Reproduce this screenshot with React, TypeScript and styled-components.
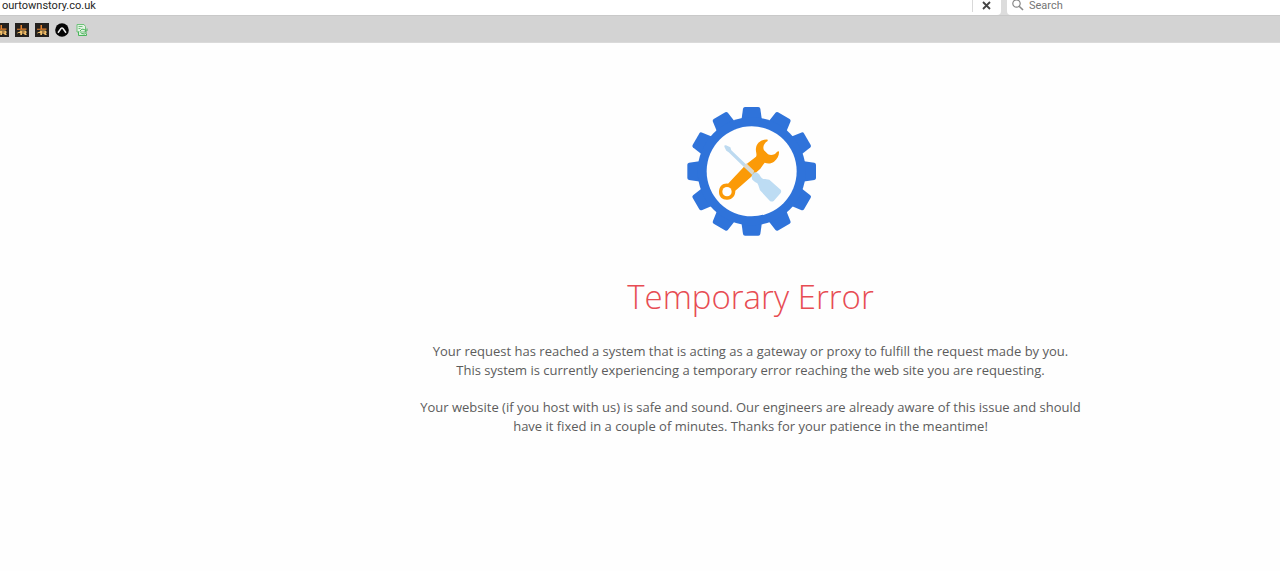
import React from 'react';
import styled, { createGlobalStyle } from 'styled-components';

const GlobalStyle = createGlobalStyle`
  * { box-sizing: border-box; }
  body {
    margin: 0;
    background: #fefefe;
    font-family: "Open Sans", sans-serif;
  }
`;

const Toolbar = styled.header`
  display: flex;
  gap: 6px;
  height: 16px;
  background: #dcdcdc;
  border-bottom: 1px solid #c9c9c9;
  overflow: hidden;
`;

const Field = styled.div<{ $grow?: boolean }>`
  display: flex;
  align-items: flex-start;
  ${(p) => (p.$grow ? 'flex: 1; border-radius: 0 0 4px 0;' : 'width: 273px; padding-left: 5px; border-radius: 0 0 0 4px;')}
  height: 15px;
  background: #fff;
`;

const TextInput = styled.input<{ $pad: number }>`
  flex: 1;
  min-width: 0;
  height: 12px;
  padding: 0 0 0 ${(p) => p.$pad}px;
  border: 0;
  outline: 0;
  background: transparent;
  color: #262626;
  font: 11px/12px Roboto, sans-serif;
  &::placeholder { color: #757575; opacity: 1; }
`;

const StopButton = styled.button`
  display: flex;
  justify-content: center;
  width: 29px;
  height: 12px;
  padding: 1px 2px 0 0;
  border: 0;
  border-left: 1px solid #d9d9d9;
  background: transparent;
`;

const Bookmarks = styled.nav`
  display: flex;
  align-items: center;
  gap: 6px;
  height: 27px;
  padding: 2px 0 0 1px;
  background: #d3d3d3;
  border-bottom: 1px solid #dadada;
  overflow: hidden;
`;

const Bookmark = styled.a<{ $cut?: boolean }>`
  display: block;
  width: 14px;
  height: 14px;
  margin-left: ${(p) => (p.$cut ? '-6px' : '0')};
  svg { display: block; }
`;

const Main = styled.main`
  display: flex;
  flex-direction: column;
  align-items: center;
  padding: 47px 0 48px 221px;
  text-align: center;
`;

const Title = styled.h1`
  margin: 21px 0 19px;
  color: #e74c53;
  font-size: 33px;
  line-height: 52px;
  font-weight: 300;
`;

const Message = styled.p`
  margin: 0 0 18px;
  color: #5c5c5c;
  font-size: 13px;
  line-height: 19px;
`;

const StarIcon = () => (
  <svg width="14" height="14" viewBox="0 0 14 14" aria-hidden="true">
    <rect width="14" height="14" fill="#24211e" />
    <path d="M5.500 2H7v3.500h4.500v1.300H2V5.700h3.500z" fill="#e8842e" />
    <path d="M5 7.500h5.500l1 1v1.500l-.7.5 1.200 1.500h-2L8.500 10.500H7V12H5.300v-2H3L2 11l.5-1.500L5 8.500z" fill="#f2c069" />
    <path d="M7 8.500h2.500v1H7z" fill="#5b3a1e" />
  </svg>
);

const PeakIcon = () => (
  <svg width="14" height="14" viewBox="0 0 14 14" aria-hidden="true">
    <circle cx="7" cy="7" r="6.800" fill="#050505" />
    <path d="M3 9.800 6 5.500q1-1.200 2 0L11 9.800" fill="none" stroke="#eee" strokeWidth="1.500" />
  </svg>
);

const PagesIcon = () => (
  <svg width="14" height="14" viewBox="0 0 14 14" aria-hidden="true">
    <path d="M2 1.500h7l1.500 2V9H2z" fill="#e6f3e6" stroke="#6cc278" />
    <path d="M3.500 3.500h4M3.500 5.500h2" stroke="#6cc278" />
    <path d="M3.500 8.500v4h8v-2" fill="#d9f1dc" stroke="#4bb45b" />
    <path d="M5 8q1.500-3 4.500-1.500L11 7.500M12 5.500V8H9.500M11.500 9.500q-2 2.500-4.500 1L5.500 9.500" fill="none" stroke="#4bb45b" />
  </svg>
);

const teeth = Array.from({ length: 12 }, (_, i) => i * 30);

const ServiceGear = () => (
  <svg width="160" height="160" viewBox="3 0 480 480" role="img" aria-label="Maintenance">
    <g fill="#2f73da">
      {teeth.map((angle) => (
        <path
          key={angle}
          transform={`rotate(${angle} 245 244)`}
          d="M214 92 219 56Q220 51 225 51H265Q270 51 271 56L276 92Z"
        />
      ))}
      <circle cx="245" cy="244" r="162" />
    </g>
    <circle cx="245" cy="244" r="135" fill="#fefefe" />
    <path
      fill="#fb9a07"
      d="M293 149C277 147 260 158 258 174C256 185 262 193 258 200L229 223L174 281C158 279 147 290 147 306C147 321 158 330 172 329C188 328 196 317 196 302L271 236L284 218C294 222 304 221 312 215C323 206 328 196 327 184L321 185C315 194 305 197 294 193L282 181C277 171 282 159 293 153Z"
    />
    <circle cx="171" cy="305" r="14" fill="#fefefe" />
    <path d="M163 170Q162 165 168 166L181 172L184 181L252 246L246 254L176 187L169 182Z" fill="#bddaf0" />
    <path d="M221 228 229 220 253 243 246 252Z" fill="#ded8c9" />
    <path
      fill="#bddcf3"
      d="M246 254 254 247Q261 246 267 252L273 262Q277 268 285 267L298 269L332 299Q335 303 332 309L311 333Q305 337 299 332L270 301L265 286Q264 278 255 276L247 269Q244 262 246 254Z"
    />
  </svg>
);

const App: React.FC = () => (
  <>
    <GlobalStyle />
    <Toolbar>
      <Field $grow>
        <TextInput $pad={2} aria-label="Address" defaultValue="ourtownstory.co.uk" />
        <StopButton aria-label="Stop loading">
          <svg width="9" height="9" viewBox="0 0 9 9" aria-hidden="true">
            <path d="M1 1 8 8M8 1 1 8" stroke="#444" strokeWidth="1.800" />
          </svg>
        </StopButton>
      </Field>
      <Field>
        <svg width="12" height="12" viewBox="0 0 12 12" aria-hidden="true">
          <circle cx="4.500" cy="3.500" r="3.700" fill="none" stroke="#888" strokeWidth="1.200" />
          <path d="M7.200 6.200 11 10" stroke="#888" strokeWidth="1.600" />
        </svg>
        <TextInput $pad={5} type="search" aria-label="Search" placeholder="Search" />
      </Field>
    </Toolbar>
    <Bookmarks aria-label="Bookmarks">
      <Bookmark $cut href="#one" aria-label="Bookmark 1"><StarIcon /></Bookmark>
      <Bookmark href="#two" aria-label="Bookmark 2"><StarIcon /></Bookmark>
      <Bookmark href="#three" aria-label="Bookmark 3"><StarIcon /></Bookmark>
      <Bookmark href="#four" aria-label="Bookmark 4"><PeakIcon /></Bookmark>
      <Bookmark href="#five" aria-label="Bookmark 5"><PagesIcon /></Bookmark>
    </Bookmarks>
    <Main>
      <ServiceGear />
      <Title>Temporary Error</Title>
      <Message>
        Your request has reached a system that is acting as a gateway or proxy to fulfill the request made by you.
        <br />
        This system is currently experiencing a temporary error reaching the web site you are requesting.
      </Message>
      <Message>
        Your website (if you host with us) is safe and sound. Our engineers are already aware of this issue and should
        <br />
        have it fixed in a couple of minutes. Thanks for your patience in the meantime!
      </Message>
    </Main>
  </>
);

export default App;
